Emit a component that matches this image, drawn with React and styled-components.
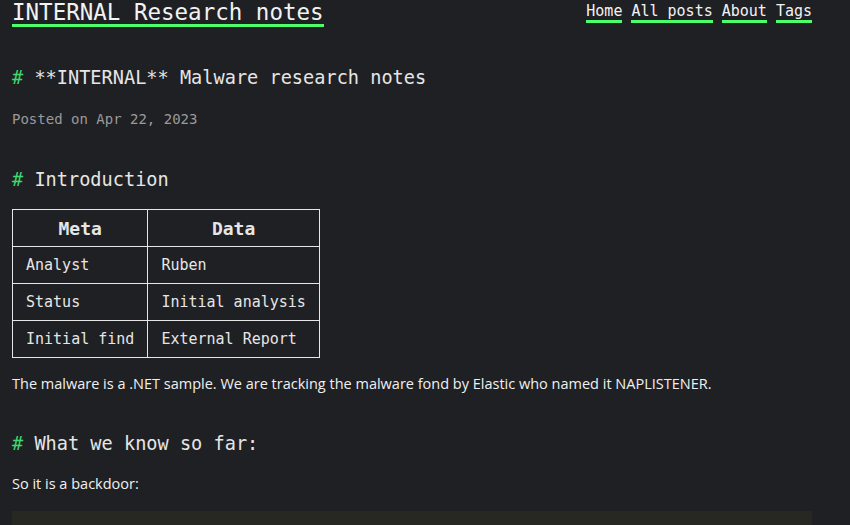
import React from 'react';
import styled, {createGlobalStyle} from 'styled-components';

const GlobalStyle = createGlobalStyle`
  body {
    margin: 0;
    background: #1f2024;
    color: #e6e6e6;
    font-family: "DejaVu Sans Mono", "Liberation Mono", monospace;
  }
`

const green = '#4cff6a';

const Page = styled.div`
  width: 800px;
  margin-left: 12px;
`

const Header = styled.header`
  display: flex;
  justify-content: space-between;
  align-items: flex-start;
`

const SiteTitle = styled.a`
  display: inline-block;
  font-size: 22.5px;
  line-height: 24px;
  color: #f2f2f2;
  text-decoration: none;
  border-bottom: 3px solid ${green};
`

const Nav = styled.nav`
  display: flex;
  gap: 9px;
`

const NavLink = styled.a`
  padding-top: 2px;
  font-size: 15px;
  line-height: 18px;
  color: #f2f2f2;
  text-decoration: none;
  border-bottom: 3px solid ${green};
`

const Heading = styled.h2`
  font-size: 18.6px;
  font-weight: normal;
  line-height: 24px;
  margin: ${p => p.$top}px 0 0;
  color: #e6e6e6;

  &::before {
    content: "# ";
    color: #3fd96a;
  }
`

const Meta = styled.div`
  margin-top: 19px;
  font-size: 14px;
  line-height: 20px;
  color: #9a9a9a;
`

const Table = styled.table`
  margin-top: 17px;
  border-collapse: collapse;
  font-size: 15px;
`

const Th = styled.th`
  border: 1px solid #e6e6e6;
  height: 36px;
  padding: 0 13px;
  font-size: 18px;
  font-weight: bold;
  text-align: center;
`

const Td = styled.td`
  border: 1px solid #e6e6e6;
  height: 36px;
  padding: 0 13px;
  white-space: nowrap;
`

const Text = styled.p`
  margin: ${p => p.$top}px 0 0;
  font-family: "Open Sans", "Noto Sans", sans-serif;
  font-size: 14.5px;
  line-height: 20px;
  color: #f0f0f0;
`

const CodeBlock = styled.pre`
  margin: 17px 0 0;
  height: 60px;
  background: #272822;
`

const rows = [
    ["Analyst", "Ruben"],
    ["Status", "Initial analysis"],
    ["Initial find", "External Report"],
];

const App = () => {
    return (
        <Page>
            <GlobalStyle/>
            <Header>
                <SiteTitle href="#">INTERNAL Research notes</SiteTitle>
                <Nav>
                    <NavLink href="#">Home</NavLink>
                    <NavLink href="#">All posts</NavLink>
                    <NavLink href="#">About</NavLink>
                    <NavLink href="#">Tags</NavLink>
                </Nav>
            </Header>

            <Heading as="h1" $top={39}>**INTERNAL** Malware research notes</Heading>
            <Meta>Posted on Apr 22, 2023</Meta>

            <Heading $top={39}>Introduction</Heading>
            <Table>
                <thead>
                <tr><Th>Meta</Th><Th>Data</Th></tr>
                </thead>
                <tbody>
                {rows.map((r, key) => (
                    <tr key={key}><Td>{r[0]}</Td><Td>{r[1]}</Td></tr>
                ))}
                </tbody>
            </Table>
            <Text $top={16}>The malware is a .NET sample. We are tracking the malware fond by Elastic who named it NAPLISTENER.</Text>

            <Heading $top={38}>What we know so far:</Heading>
            <Text $top={18}>So it is a backdoor:</Text>
            <CodeBlock/>
        </Page>
    );
};

export default App;
